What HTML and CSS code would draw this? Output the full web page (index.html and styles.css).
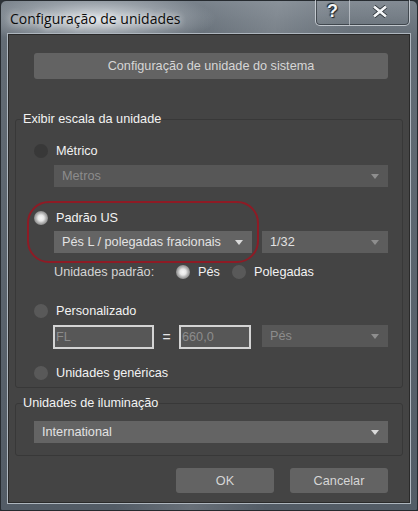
FILE: index.html
```html
<!DOCTYPE html>
<html>
<head>
<meta charset="utf-8">
<link rel="stylesheet" href="styles.css">
</head>
<body>
<div class="window">
  <div class="titlebar">
    <div class="title">Configuração de unidades</div>
    <div class="caption-btns">
      <div class="cap-btn help">?</div>
      <div class="cap-btn close">
        <svg width="16" height="13" viewBox="0 0 16 13"><path d="M2 1.5 L14 11.5 M14 1.5 L2 11.5" stroke="#1e2429" stroke-width="4.2" stroke-linecap="butt"/><path d="M2 1.5 L14 11.5 M14 1.5 L2 11.5" stroke="#f4f6f8" stroke-width="2.8" stroke-linecap="butt"/></svg>
      </div>
    </div>
  </div>
  <div class="client">
    <div class="btn sys">Configuração de unidade do sistema</div>

    <fieldset class="group g1">
      <legend>Exibir escala da unidade</legend>
      <div class="group-body">
        <div class="radio-row r-metric"><span class="radio dark"></span><span class="lbl">Métrico</span></div>
        <div class="select disabled full ind1"><span>Metros</span><span class="arrow"></span></div>

        <div class="us-block">
          <div class="highlight"></div>
          <div class="radio-row"><span class="radio on"></span><span class="lbl">Padrão US</span></div>
          <div class="sel-row">
            <div class="select active us-main"><span>Pés L / polegadas fracionais</span><span class="arrow"></span></div>
            <div class="select frac"><span>1/32</span><span class="arrow dim"></span></div>
          </div>
        </div>

        <div class="default-row">
          <span class="dlbl">Unidades padrão:</span>
          <span class="radio on"></span><span class="lbl opt-feet">Pés</span>
          <span class="radio"></span><span class="lbl">Polegadas</span>
        </div>

        <div class="radio-row r-custom"><span class="radio"></span><span class="lbl">Personalizado</span></div>
        <div class="input-row">
          <div class="input fl">FL</div>
          <div class="eq">=</div>
          <div class="input val">660,0</div>
          <div class="select disabled unit"><span>Pés</span><span class="arrow"></span></div>
        </div>

        <div class="radio-row r-generic"><span class="radio"></span><span class="lbl">Unidades genéricas</span></div>
      </div>
    </fieldset>

    <fieldset class="group g2">
      <legend>Unidades de iluminação</legend>
      <div class="group-body">
        <div class="select active wide"><span>International</span><span class="arrow"></span></div>
      </div>
    </fieldset>

    <div class="actions">
      <div class="btn act">OK</div>
      <div class="btn act">Cancelar</div>
    </div>
  </div>
</div>
</body>
</html>
```

FILE: styles.css
```css
html, body {
  margin: 0;
  padding: 0;
}
body {
  width: 418px;
  height: 511px;
  overflow: hidden;
  background: #2c3238;
  font-family: "Liberation Sans", Arial, sans-serif;
  font-size: 12.7px;
}
.window {
  width: 418px;
  height: 511px;
  box-sizing: border-box;
  display: flex;
  flex-direction: column;
  border-radius: 6px 6px 2px 2px;
  border: 1px solid #262b30;
  background:
    radial-gradient(ellipse 120px 28px at 95px 18px, rgba(232,236,240,0.9), rgba(200,206,212,0.4) 60%, rgba(200,206,212,0) 100%),
    linear-gradient(100deg, rgba(255,255,255,0.0) 40%, rgba(255,255,255,0.12) 55%, rgba(255,255,255,0) 70%),
    linear-gradient(to bottom, #7a838c 0%, #636c75 40px, #535c66 100%);
}
.titlebar {
  height: 33px;
  display: flex;
  justify-content: space-between;
  align-items: flex-start;
}
.title {
  padding: 8px 0 0 9px;
  font-family: "Open Sans", "Noto Sans", sans-serif;
  font-size: 14px;
  line-height: 20px;
  color: #0c0c0c;
  text-shadow: 0 0 6px rgba(255,255,255,0.8), 0 0 10px rgba(255,255,255,0.6);
}
.caption-btns {
  display: flex;
  margin-right: 7px;
  margin-top: -1px;
  height: 25px;
  border: 1px solid rgba(225,230,235,0.7);
  border-top: none;
  border-radius: 0 0 5px 5px;
  box-shadow: inset 0 0 0 1px rgba(30,36,42,0.6);
  background: linear-gradient(to bottom, rgba(255,255,255,0.08), rgba(255,255,255,0.02));
}
.cap-btn {
  height: 25px;
  display: flex;
  align-items: center;
  justify-content: center;
}
.help {
  width: 34px;
  border-right: 1px solid rgba(225,230,235,0.55);
  font-family: "Liberation Sans", Arial, sans-serif;
  font-weight: bold;
  font-size: 18px;
  color: #f4f6f8;
  text-shadow: 0 0 1px #1e2429, 1px 1px 1px #1e2429, -1px -1px 1px #1e2429;
  padding-bottom: 2px;
  box-sizing: border-box;
}
.close {
  width: 59px;
  padding-bottom: 2px;
  box-sizing: border-box;
}
.client {
  margin: 0 7px 7px 7px;
  flex: 1;
  background: #444444;
  border: 1px solid #2a2a2a;
  box-shadow: 0 0 0 1px #aeb6be;
  display: flex;
  flex-direction: column;
  box-sizing: border-box;
}
.btn {
  background: #636363;
  border-radius: 3px;
  color: #d6d6d6;
  display: flex;
  align-items: center;
  justify-content: center;
  box-sizing: border-box;
}
.sys {
  margin: 18px 0 0 25px;
  width: 354px;
  height: 26px;
  padding-bottom: 1px;
}
.group {
  margin: 0;
  border: 1px solid #383838;
  border-radius: 3px;
  min-inline-size: 0;
  box-sizing: border-box;
  width: 388px;
  margin-left: 6px;
  padding: 0;
}
.group legend {
  padding: 0;
  margin-left: 7px;
  color: #f2f2f2;
  line-height: 14px;
}
.group-body {
  padding: 0 14px 0 18px;
}
.g1 .group-body {
  padding-bottom: 6px;
}
.g1 {
  margin-top: 33px;
}
.radio-row {
  display: flex;
  align-items: center;
  height: 16px;
}
.radio {
  width: 14px;
  height: 14px;
  border-radius: 50%;
  background: #595959;
  flex: none;
}
.radio.dark {
  background: #383838;
}
.radio.on {
  background: radial-gradient(circle at 50% 50%, #f6f6f6 0, #e6e6e6 3px, #b4b4b4 5px, #8c8c8c 7px);
}
.lbl {
  color: #f2f2f2;
  margin-left: 8px;
}
.r-metric {
  margin-top: 17px;
}
.select {
  height: 22px;
  display: flex;
  align-items: center;
  justify-content: space-between;
  box-sizing: border-box;
  padding: 0 9px 0 8px;
}
.select.disabled {
  background: #575757;
  color: #8c8c8c;
}
.select.active {
  background: #646464;
  color: #e2e2e2;
}
.select.frac {
  background: #5d5d5d;
  color: #e2e2e2;
}
.arrow {
  width: 0;
  height: 0;
  border-left: 4px solid transparent;
  border-right: 4px solid transparent;
  border-top: 5px solid #dadada;
}
.select.disabled .arrow,
.arrow.dim {
  border-top-color: #8e8e8e;
}
.full {
  width: 334px;
}
.wide {
  width: 354px;
}
.ind1 {
  margin: 6px 0 0 20px;
}
.us-block {
  position: relative;
  margin-top: 23px;
}
.highlight {
  position: absolute;
  left: -7px;
  top: -9px;
  width: 232px;
  height: 62px;
  box-sizing: border-box;
  border: 2px solid #8e1b25;
  border-radius: 22px;
  pointer-events: none;
}
.sel-row {
  display: flex;
  margin: 5px 0 0 20px;
  gap: 10px;
}
.us-main {
  width: 198px;
}
.frac {
  width: 126px;
}
.default-row {
  display: flex;
  align-items: center;
  height: 16px;
  margin: 11px 0 0 20px;
}
.dlbl {
  color: #d4d4d4;
  width: 122px;
}
.opt-feet {
  width: 34px;
}
.r-custom {
  margin-top: 23px;
}
.input-row {
  display: flex;
  align-items: flex-start;
  margin: 6px 0 0 19px;
}
.input {
  height: 24px;
  box-sizing: border-box;
  border: 2px solid #d4d4d4;
  background: #575757;
  color: #8c8c8c;
  padding: 2px 1px 0 1px;
  line-height: 16px;
}
.fl {
  width: 101px;
}
.eq {
  width: 25px;
  color: #e6e6e6;
  text-align: center;
  line-height: 24px;
  font-size: 14px;
}
.val {
  width: 72px;
}
.unit {
  width: 126px;
  margin-left: 11px;
}
.r-generic {
  margin-top: 16px;
}
.g2 {
  margin-top: 8px;
}
.g2 .group-body {
  padding-bottom: 12px;
}
.g2 .select {
  margin-top: 11px;
}
.actions {
  display: flex;
  justify-content: flex-end;
  gap: 16px;
  margin: 12px 21px 0 0;
}
.act {
  width: 98px;
  height: 25px;
}
```
